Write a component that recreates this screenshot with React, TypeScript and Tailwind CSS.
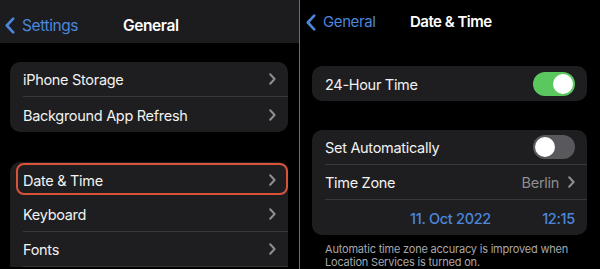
import type { ReactNode } from 'react';

const font = { fontFamily: 'Inter, "Noto Sans", sans-serif' };

function Chevron({ className = '' }: { className?: string }) {
  return (
    <svg width="7" height="12" viewBox="0 0 7 12" className={className} fill="none">
      <path d="M1.2 1.2 5.6 6 1.2 10.8" stroke="currentColor" strokeWidth="2" strokeLinecap="round" strokeLinejoin="round" />
    </svg>
  );
}

function BackChevron() {
  return (
    <svg width="10" height="17" viewBox="0 0 10 17" fill="none">
      <path d="M8.2 1.6 1.8 8.5l6.4 6.9" stroke="currentColor" strokeWidth="2.6" strokeLinecap="round" strokeLinejoin="round" />
    </svg>
  );
}

function Toggle({ on }: { on: boolean }) {
  return (
    <div
      className={`flex h-[24px] w-[42px] items-center rounded-full p-[2px] ${
        on ? 'justify-end bg-[#5bc85f]' : 'justify-start bg-[#58585d]'
      }`}
    >
      <div className="h-[20px] w-[20px] rounded-full bg-white" />
    </div>
  );
}

function Row({
  label,
  right,
  divider,
  highlight,
}: {
  label: string;
  right?: ReactNode;
  divider?: boolean;
  highlight?: boolean;
}) {
  return (
    <div className="relative flex h-[35px] items-center pl-[13px]">
      {highlight && (
        <div className="absolute bottom-[2px] left-[6px] right-0 top-[1px] rounded-[8px] border-2 border-[#d9533b]" />
      )}
      <div
        className={`flex h-full flex-1 items-center justify-between pr-[12px] ${
          divider ? 'border-b border-[#38383b]' : ''
        }`}
      >
        <span className="pt-[2px] text-[14.5px] tracking-[-0.3px] text-[#f2f2f2]">{label}</span>
        {right ?? <Chevron className="text-[#8d8d92]" />}
      </div>
    </div>
  );
}

export default function App() {
  return (
    <div className="flex h-[269px] w-[600px] overflow-hidden bg-black" style={font}>
      {/* left screen */}
      <div className="flex w-[299px] flex-col">
        <div className="relative flex h-[43px] items-center bg-[#1c1c1e] pt-[8px]">
          <div className="flex items-center gap-[7px] pl-[5px] text-[#4a87dd]">
            <BackChevron />
            <span className="text-[15.5px] tracking-[-0.4px]">Settings</span>
          </div>
          <span className="absolute left-[123px] text-[15.5px] font-semibold tracking-[-0.4px] text-white">
            General
          </span>
        </div>
        <div className="ml-[10px] mr-[11px] mt-[19px] overflow-hidden rounded-[10px] bg-[#1e1e20]">
          <Row label="iPhone Storage" divider />
          <Row label="Background App Refresh" />
        </div>
        <div className="ml-[10px] mr-[11px] mt-[30px] rounded-t-[10px] bg-[#1e1e20]">
          <Row label="Date & Time" highlight />
          <Row label="Keyboard" divider />
          <Row label="Fonts" divider />
        </div>
      </div>

      <div className="w-px bg-[#6e6e70]" />

      {/* right screen */}
      <div className="flex flex-1 flex-col">
        <div className="relative flex h-[42px] items-center pt-[2px]">
          <div className="flex items-center gap-[7px] pl-[6px] text-[#4a87dd]">
            <BackChevron />
            <span className="text-[15px] tracking-[-0.4px]">General</span>
          </div>
          <span className="absolute left-[110px] text-[15px] font-semibold tracking-[-0.5px] text-white">
            Date &amp; Time
          </span>
        </div>
        <div className="ml-[12px] mr-[13px] mt-[24px] overflow-hidden rounded-[10px] bg-[#1e1e20]">
          <Row label="24-Hour Time" right={<Toggle on />} />
        </div>
        <div className="ml-[12px] mr-[13px] mt-[29px] overflow-hidden rounded-[10px] bg-[#1e1e20]">
          <Row label="Set Automatically" divider right={<Toggle on={false} />} />
          <Row
            label="Time Zone"
            divider
            right={
              <div className="flex items-center gap-[9px] text-[#8d8d92]">
                <span className="pt-[2px] text-[14.5px] tracking-[-0.3px]">Berlin</span>
                <Chevron />
              </div>
            }
          />
          <div className="flex h-[35px] items-center pr-[12px] pt-[2px] text-[14.5px] font-medium tracking-[-0.3px] text-[#4a87dd]">
            <span className="ml-[98px]">11. Oct 2022</span>
            <span className="ml-auto">12:15</span>
          </div>
        </div>
        <p className="pl-[25px] pt-[8px] text-[11px] leading-[13px] tracking-[-0.2px] text-[#a8a8ac]">
          Automatic time zone accuracy is improved when
          <br />
          Location Services is turned on.
        </p>
      </div>
    </div>
  );
}
